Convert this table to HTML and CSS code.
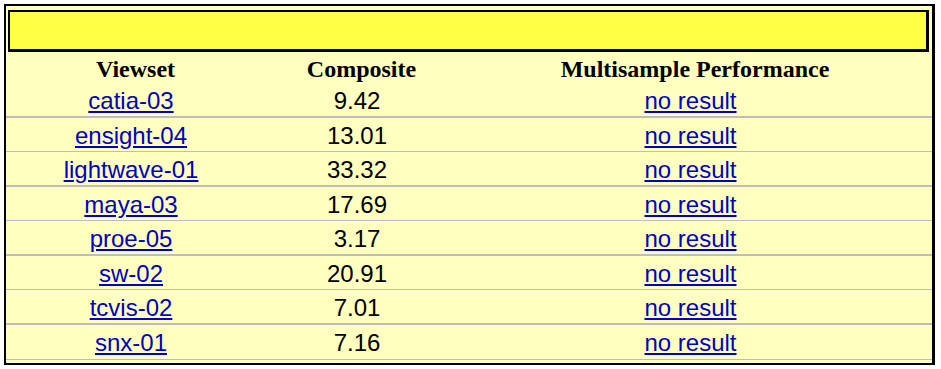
FILE: index.html
```html
<!DOCTYPE html>
<html>
<head>
<meta charset="utf-8">
<link rel="stylesheet" href="styles.css">
</head>
<body>
<div class="frame">
  <div class="banner"></div>
  <div class="row head">
    <div class="cell">Viewset</div>
    <div class="cell">Composite</div>
    <div class="cell">Multisample Performance</div>
  </div>
  <div class="row data"><div class="cell"><a href="#">catia-03</a></div><div class="cell">9.42</div><div class="cell"><a href="#">no result</a></div></div>
  <div class="row data"><div class="cell"><a href="#">ensight-04</a></div><div class="cell">13.01</div><div class="cell"><a href="#">no result</a></div></div>
  <div class="row data"><div class="cell"><a href="#">lightwave-01</a></div><div class="cell">33.32</div><div class="cell"><a href="#">no result</a></div></div>
  <div class="row data"><div class="cell"><a href="#">maya-03</a></div><div class="cell">17.69</div><div class="cell"><a href="#">no result</a></div></div>
  <div class="row data"><div class="cell"><a href="#">proe-05</a></div><div class="cell">3.17</div><div class="cell"><a href="#">no result</a></div></div>
  <div class="row data"><div class="cell"><a href="#">sw-02</a></div><div class="cell">20.91</div><div class="cell"><a href="#">no result</a></div></div>
  <div class="row data"><div class="cell"><a href="#">tcvis-02</a></div><div class="cell">7.01</div><div class="cell"><a href="#">no result</a></div></div>
  <div class="row data"><div class="cell"><a href="#">snx-01</a></div><div class="cell">7.16</div><div class="cell"><a href="#">no result</a></div></div>
</div>
</body>
</html>
```
FILE: styles.css
```css
html, body {
  margin: 0;
  padding: 0;
  background: #ffffff;
}
.frame {
  margin: 4px 0 0 4px;
  width: 931px;
  height: 361px;
  box-sizing: border-box;
  border-style: solid;
  border-color: #000;
  border-width: 2px 3px 2px 2px;
  background: #ffffc0;
  display: flex;
  flex-direction: column;
}
.banner {
  margin: 4px 3px 0 2px;
  height: 42px;
  box-sizing: border-box;
  background: #ffff44;
  border-style: solid;
  border-color: #000;
  border-width: 2px 3px 3px 2px;
  flex: none;
}
.row {
  display: grid;
  grid-template-columns: 259px 193px 1fr;
  align-items: center;
  box-sizing: border-box;
  flex: none;
}
.head {
  height: 31px;
  padding-top: 3px;
  font-family: "Liberation Serif", "Times New Roman", serif;
  font-weight: bold;
  font-size: 24px;
  color: #000;
}
.data {
  height: 34.57px;
  padding-top: 3px;
  border-bottom: 1px solid #bdbdbd;
  font-family: "Liberation Sans", Arial, sans-serif;
  font-size: 24px;
  color: #000;
}
.data:nth-child(odd) {
  border-bottom-width: 2px;
}
.cell {
  text-align: center;
  white-space: nowrap;
}
.data .cell {
  padding-right: 9px;
}
.data a {
  color: #0000c0;
  text-decoration: underline;
}
```
